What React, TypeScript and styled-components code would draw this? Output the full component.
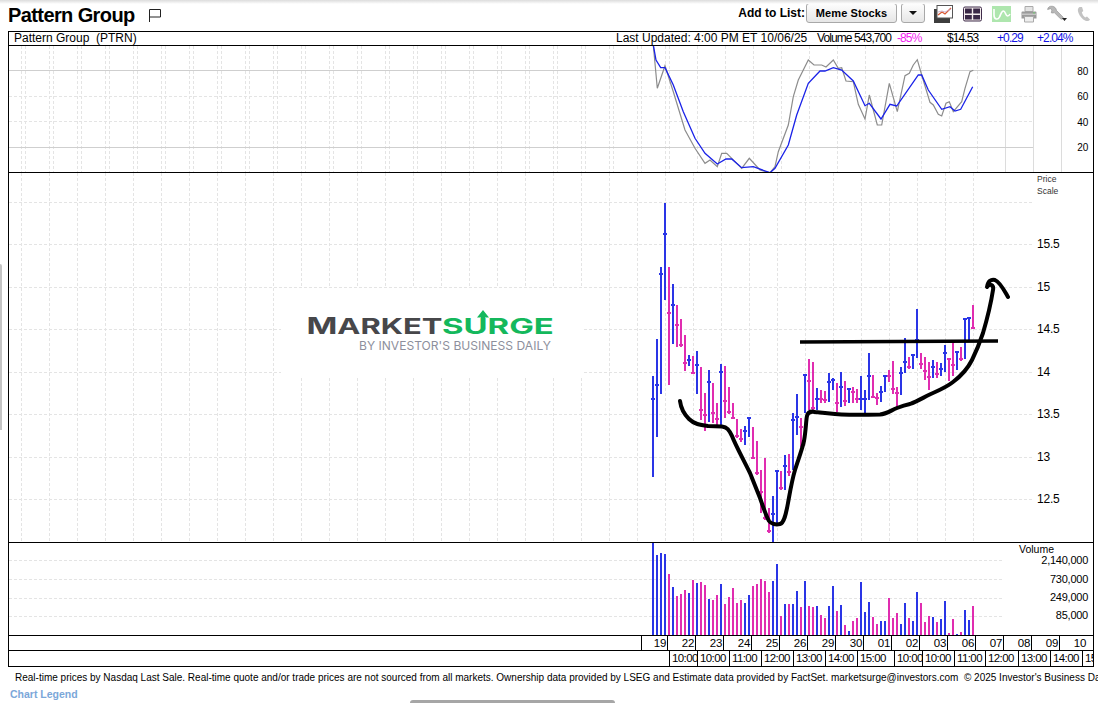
import React from 'react';
import styled, { createGlobalStyle } from 'styled-components';

const BLUE = '#2a35e6';
const PINK = '#e02db0';
const ARIAL = '"Liberation Sans", Arial, sans-serif';

// type, high, low, close (page pixels, read off the chart)
type Bar = ['b' | 'p', number, number, number];
const bars: Bar[] = [
    ['b',376,477,399],['b',339,437,385],['b',267,394,274],['b',203,300,234],['p',267,385,313],['b',284,344,305],
    ['p',305,347,325],['p',319,347,345],['p',335,371,363],['b',355,366,360],['p',356,374,373],['b',351,394,365],
    ['p',367,420,410],['p',393,431,415],['b',370,422,382],['p',383,423,413],['p',403,425,419],['b',364,425,372],
    ['p',366,418,401],['p',387,414,412],['p',403,419,418],['p',419,438,436],['p',429,442,439],['b',426,445,431],
    ['b',417,437,418],['p',427,458,458],['p',441,475,473],['p',470,513,492],['p',458,520,518],['p',508,533,531],
    ['b',496,543,514],['b',471,525,471],['p',471,490,488],['b',455,490,466],['p',454,476,472],['b',413,470,420],
    ['b',394,435,417],['p',418,447,427],['b',374,413,375],['p',359,410,381],['p',362,413,408],['b',388,410,399],
    ['p',390,403,399],['p',391,403,400],['b',373,402,382],['b',378,390,380],['p',383,412,403],['b',372,407,387],
    ['p',381,406,401],['b',388,403,389],['p',387,403,392],['p',389,403,399],['b',376,410,399],['b',390,413,399],
    ['b',353,400,376],['p',375,398,397],['p',393,405,398],['b',386,402,392],['b',375,392,376],['p',370,382,376],
    ['p',361,394,389],['p',387,407,393],['b',367,395,373],['b',338,373,362],['p',357,369,367],['b',354,369,355],
    ['b',309,358,340],['p',353,369,364],['p',357,380,371],['p',362,390,377],['b',360,378,367],['p',362,378,374],
    ['b',363,376,369],['b',345,372,353],['p',359,381,359],['p',343,376,365],['b',351,370,352],['p',347,361,359],
    ['b',318,359,319],['b',317,340,318],['p',305,329,328],
];

const volumes = [
    543,555,553,554,574,587,596,594,590,593,580,583,582,585,599,600,595,584,604,597,588,603,600,603,595,586,584,
    579,581,592,581,564,616,604,604,604,591,607,581,606,607,606,615,618,606,586,611,605,625,631,621,618,582,612,
    602,617,624,621,621,598,618,613,624,603,618,621,592,603,622,616,617,622,619,601,633,619,634,632,610,620,606,
];

// oscillator lines, in 3x crop coordinates of the upper panel
const toOsc = (pts: number[][]) => pts.map(([x, y]) => `${(640 + x / 3).toFixed(1)},${(45 + y / 3).toFixed(1)}`).join(' ');
const oscBlue = toOsc([[40,0],[48,45],[62,68],[75,68],[100,120],[130,200],[165,280],[195,325],[232,357],[258,342],[275,342],[305,368],[340,365],[390,383],[405,370],[445,300],[470,210],[505,115],[540,78],[555,78],[580,68],[605,75],[640,108],[675,182],[688,175],[723,222],[750,178],[770,183],[835,90],[845,90],[865,135],[905,193],[930,185],[945,198],[962,193],[998,125]]);
const oscGray = toOsc([[40,0],[52,130],[75,62],[100,140],[135,255],[165,310],[195,355],[210,345],[232,365],[245,325],[260,325],[305,370],[328,340],[360,375],[390,383],[405,365],[415,320],[445,240],[460,155],[475,105],[505,45],[522,60],[545,60],[558,66],[580,45],[595,70],[605,68],[618,108],[640,110],[655,178],[675,222],[688,150],[712,240],[725,240],[748,115],[772,200],[795,92],[808,85],[820,60],[832,44],[845,90],[870,172],[880,180],[895,208],[905,213],[918,175],[928,170],[940,200],[965,170],[975,130],[990,80],[1000,76]]);

const inkCup = 'M680 401 C681 409 684 414 689 419 C694 424 700 425 708 426 L722 426.5 C727 427 729 430 732 436 C735 444 740 453 750 473 L760 498 C764 509 766 516 769 521 C771 524 776 525 780 524 C784 523 786 514 788 503 C790 492 792 480 795 470 C798 460 802 450 804 441 C806 430 806 420 807 416 C808 412 811 411 815 412 L830 413.5 C840 415 860 415 880 414.5 C886 414 890 411 897 408 C902 406 905 405 910 404 C918 401 926 396 933 393 C942 389 948 386 953 382 C961 376 968 368 972 360 C977 350 980 342 983 333 C988 316 991 303 993 290 C994 285 990 283 987 287 C988 281 991 279 995 280 C1000 282 1004 290 1008 297';

const priceGrid = [202.5, 244.5, 287.5, 329.5, 372.5, 414.5, 457.5, 499.5];
const volGrid = [560.5, 579.5, 598.5, 616.5];
const mainVerticals = Array.from({ length: 35 }, (_, i) => 21.5 + 28 * i);
const upperVerticals = Array.from({ length: 38 }, (_, i) => 25.5 + 28 * i);
const upperExtra = Array.from({ length: 24 }, (_, i) => 21.5 + 28 * i);

const priceLabels: [string, number][] = [['15.5', 244], ['15', 287], ['14.5', 329], ['14', 372], ['13.5', 414], ['13', 457], ['12.5', 499]];
const volLabels: [string, number][] = [['2,140,000', 560], ['730,000', 579], ['249,000', 597], ['85,000', 615]];
const oscLabels: [string, number][] = [['80', 71.5], ['60', 96.5], ['40', 122.5], ['20', 147.5]];

const days = ['19', '22', '23', '24', '25', '26', '29', '30', '01', '02', '03', '06', '07', '08', '09', '10'];
const times: [string, number][] = [['10:00', 28], ['10:00', 32], ['11:00', 32], ['12:00', 32], ['13:00', 32], ['14:00', 32], ['15:00', 37], ['10:00', 28], ['10:00', 32], ['11:00', 31], ['12:00', 33], ['13:00', 32], ['14:00', 32], ['15', 12]];

const App = () => {
    return (
        <Page>
            <GlobalStyle />
            <TopShade />
            <SideHandle />
            <TopBar>
                <Title>Pattern Group</Title>
                <FlagIcon viewBox="0 0 12 13">
                    <path d="M.5 13V.5h11V8H.5" fill="none" stroke="#222" strokeWidth="1" />
                </FlagIcon>
                <TopRight>
                    <AddLabel>Add to List:</AddLabel>
                    <ListButton>Meme Stocks</ListButton>
                    <DropButton><Caret /></DropButton>
                    <ToolIcons>
                        <ToolIcon $w={19} viewBox="0 0 19 18">
                            <rect x="0" y="4" width="16" height="14" fill="#3d3d3d" />
                            <rect x="3" y="0.5" width="15.5" height="12.5" fill="#fff" stroke="#555" />
                            <path d="M4 10l4-3 3 2 6-6" fill="none" stroke="#d8552e" strokeWidth="1.2" />
                            <path d="M4 7l4-1 3 1 6-3" fill="none" stroke="#c4a0c0" strokeWidth=".8" />
                        </ToolIcon>
                        <ToolIcon $w={19} viewBox="0 0 19 15">
                            <rect x=".5" y=".5" width="18" height="14" rx="1.5" fill="#f3ecec" stroke="#3f2c4a" />
                            <path d="M2 2h6.8v5H2zM10.2 2H17v5h-6.8zM2 8.4h6.8V13H2zM10.2 8.4H17V13h-6.8z" fill="#3a2846" />
                        </ToolIcon>
                        <ToolIcon $w={19} viewBox="0 0 19 16">
                            <rect width="19" height="16" fill="#aee6ae" />
                            <path d="M2 3v6c0 5 4 5 5.500 2s2-6 4-6 2 5 4 5c1 0 2-1 2.500-2" fill="none" stroke="#fff" strokeWidth="1.6" />
                        </ToolIcon>
                        <ToolIcon $w={16} viewBox="0 0 16 17">
                            <path d="M4 1h8v5H4z" fill="#e4e4e4" stroke="#aaa" />
                            <path d="M1.500 6h13a1 1 0 0 1 1 1v6h-15V7a1 1 0 0 1 1-1z" fill="#9b9b9b" />
                            <rect x="1" y="8" width="14" height="1.500" fill="#c6c6c6" />
                            <rect x="12" y="6.800" width="2" height="1.200" fill="#7bc47b" />
                            <path d="M3.500 11h9v5.500h-9z" fill="#eee" stroke="#aaa" />
                        </ToolIcon>
                        <ToolIcon $w={20} viewBox="0 0 20 16">
                            <path d="M5.500 .3C3 -.2 .8 1 .6 3.500l3-.8 1.300 1.300-.6 2.800c1.200.4 2.200.3 3-.2l6.200 6.200c1 1 3 .2 2.700-1.500L9.500 4.500C9.200 2.300 7.800 .7 5.500 .3z" fill="#b8b8b8" stroke="#8c8c8c" strokeWidth=".6" />
                            <path d="M15 12h5l-2.500 3z" fill="#222" />
                        </ToolIcon>
                        <ToolIcon $w={14} viewBox="0 0 14 15">
                            <path d="M2.500.5C.8 1.500.3 3.500 1.500 6.500c1.300 3.200 3.800 6.500 7 7.800 2 .7 3.500.2 4.500-1.300l-3-3-1.800 1C6.800 10.200 5.500 8 4.800 5.800l1.500-1.300L5 .5z" fill="#c3c3c3" />
                        </ToolIcon>
                    </ToolIcons>
                </TopRight>
            </TopBar>

            <Frame>
                <InfoRow>
                    <InfoName>Pattern Group&nbsp; (PTRN)</InfoName>
                    <InfoUpdated>Last Updated: 4:00 PM ET 10/06/25</InfoUpdated>
                    <InfoTight $w={80}>Volume 543,700</InfoTight>
                    <InfoTight $w={50} $color="#f21df0">-85%</InfoTight>
                    <InfoTight $w={50}>$14.53</InfoTight>
                    <InfoTight $w={40} $color="#1414e6">+0.29</InfoTight>
                    <InfoTight $w={40} $color="#1414e6">+2.04%</InfoTight>
                </InfoRow>

                <Panel $h={126}>
                    <ChartSvg viewBox="9 46 1084 126">
                        {upperExtra.map(x => <GridLine key={x} x1={x} x2={x} y1={46} y2={172} />)}
                        {upperVerticals.map(x => (x < 1000
                            ? <GridLine key={x} x1={x} x2={x} y1={46} y2={172} />
                            : <line key={x} x1={x} x2={x} y1={46} y2={172} stroke="#dcdcdc" />))}
                        <line x1={9} x2={1033} y1={70.5} y2={70.5} stroke="#cfcfcf" />
                        <GridLine x1={9} x2={1033} y1={96.5} y2={96.5} />
                        <GridLine x1={9} x2={1033} y1={121.5} y2={121.5} />
                        <line x1={9} x2={1033} y1={147.5} y2={147.5} stroke="#cfcfcf" />
                        <polyline points={oscGray} fill="none" stroke="#8c8c8c" strokeWidth="1.2" />
                        <polyline points={oscBlue} fill="none" stroke="#1a22e8" strokeWidth="1.3" />
                    </ChartSvg>
                    {oscLabels.map(([t, y]) => <OscLabel key={t} $top={y - 46}>{t}</OscLabel>)}
                </Panel>

                <Panel $h={369}>
                    <ChartSvg viewBox="9 173 1084 369">
                        {mainVerticals.map(x => <GridLine key={x} x1={x} x2={x} y1={173} y2={542} />)}
                        {priceGrid.map(y => <GridLine key={y} x1={9} x2={1033} y1={y} y2={y} />)}
                        {bars.map(([type, hi, lo, close], i) => {
                            const x = 653 + 4 * i;
                            const fill = type === 'b' ? BLUE : PINK;
                            return (
                                <g key={i} fill={fill}>
                                    <rect x={x - 1} y={hi} width={2} height={lo - hi} />
                                    <rect x={x - 2} y={close - 1} width={4} height={2} />
                                </g>
                            );
                        })}
                        <path d={inkCup} fill="none" stroke="#000" strokeWidth="4" strokeLinecap="round" strokeLinejoin="round" />
                        <path d="M800 342 L998 341" fill="none" stroke="#000" strokeWidth="3.600" />
                    </ChartSvg>
                    <ScaleTitle $top={0}>Price</ScaleTitle>
                    <ScaleTitle $top={12}>Scale</ScaleTitle>
                    {priceLabels.map(([t, y]) => <PriceLabel key={t} $top={y - 173}>{t}</PriceLabel>)}
                    <LogoBox>
                        <LogoSvg viewBox="307 310 246 42">
                            <LogoWord transform="translate(306.500 334) scale(1.44 1)" fill="#47474a">
                                <tspan fontSize="23">M</tspan>ARKET
                            </LogoWord>
                            <LogoWord transform="translate(442 334) scale(1.53 1)" fill="#14b85c">SURGE</LogoWord>
                            <path d="M477 317.500L483 310l6 7.500h-4V322h-4v-4.500z" fill="#14b85c" />
                            <LogoSub x={359} y={350} textLength={192} lengthAdjust="spacingAndGlyphs">BY INVESTOR'S BUSINESS DAILY</LogoSub>
                        </LogoSvg>
                    </LogoBox>
                </Panel>

                <Panel $h={92}>
                    <ChartSvg viewBox="9 543 1084 92">
                        {volGrid.map(y => <GridLine key={y} x1={9} x2={1003} y1={y} y2={y} />)}
                        {volumes.map((top, i) => (
                            <rect key={i} x={652 + 4 * i} y={top} width={2} height={635 - top} fill={bars[i][0] === 'b' ? BLUE : PINK} />
                        ))}
                    </ChartSvg>
                    <VolumeTitle>Volume</VolumeTitle>
                    {volLabels.map(([t, y]) => <VolLabel key={t} $top={y - 543}>{t}</VolLabel>)}
                </Panel>

                <DayRow>
                    <AxisGap $w={632} />
                    {days.map((d, i) => <DayCell key={d} $w={i === 0 ? 26 : 28}>{d}</DayCell>)}
                </DayRow>
                <TimeRow>
                    <AxisGap $w={660} />
                    {times.map(([t, w], i) => <TimeCell key={i} $w={w}>{t}</TimeCell>)}
                </TimeRow>
            </Frame>

            <Footer>
                <Disclaimer>
                    Real-time prices by Nasdaq Last Sale. Real-time quote and/or trade prices are not sourced from all markets. Ownership data provided by LSEG and Estimate data provided by FactSet. marketsurge@investors.com&nbsp; © 2025 Investor's Business Daily
                </Disclaimer>
                <Legend>Chart Legend</Legend>
            </Footer>
            <BottomTab />
        </Page>
    );
};

const GlobalStyle = createGlobalStyle`
    html, body {
        margin: 0;
        padding: 0;
        background: #fff;
        overflow: hidden;
    }
`;

const Page = styled.div`
    position: relative;
    width: 1098px;
    height: 703px;
    overflow: hidden;
    background: #fff;
    font-family: ${ARIAL};
    color: #000;
`;

const TopShade = styled.div`
    position: absolute;
    top: 0;
    left: 0;
    right: 0;
    height: 4px;
    background: linear-gradient(#dcdcdc, #fff);
`;

const SideHandle = styled.div`
    position: absolute;
    left: 0;
    top: 264px;
    width: 2px;
    height: 166px;
    background: #c4c4c4;
    border-top-right-radius: 2px;
`;

const BottomTab = styled.div`
    position: absolute;
    left: 410px;
    bottom: 0;
    width: 205px;
    height: 3px;
    background: #a6a6a6;
    border-radius: 4px 4px 0 0;
`;

const TopBar = styled.div`
    display: flex;
    align-items: center;
    height: 31px;
    padding: 0 7px 0 8px;
    box-sizing: border-box;
`;

const Title = styled.h1`
    margin: 0;
    font-size: 20px;
    font-weight: 700;
    letter-spacing: -0.6px;
    line-height: 31px;
`;

const FlagIcon = styled.svg`
    width: 12px;
    height: 13px;
    margin: -1px 0 0 14px;
`;

const TopRight = styled.div`
    display: flex;
    align-items: center;
    margin-left: auto;
    height: 31px;
    padding-bottom: 5px;
    box-sizing: border-box;
`;

const AddLabel = styled.span`
    font-size: 12px;
    font-weight: 700;
    margin-right: 1px;
`;

const ListButton = styled.div`
    display: flex;
    align-items: center;
    justify-content: center;
    width: 91px;
    height: 20px;
    box-sizing: border-box;
    border: 1px solid #a8a8a8;
    border-radius: 3px;
    background: linear-gradient(#fdfdfd, #e6e6e6);
    font-size: 11px;
    font-weight: 700;
    letter-spacing: 0.1px;
`;

const DropButton = styled(ListButton)`
    width: 24px;
    margin-left: 4px;
`;

const Caret = styled.span`
    width: 0;
    height: 0;
    border-left: 4px solid transparent;
    border-right: 4px solid transparent;
    border-top: 4px solid #111;
`;

const ToolIcons = styled.div`
    display: flex;
    align-items: center;
    gap: 10px;
    margin: 1px 0 0 9px;
`;

const ToolIcon = styled.svg<{ $w: number }>`
    width: ${({ $w }) => $w}px;
    height: 18px;
    display: block;
`;

const Frame = styled.div`
    margin-left: 8px;
    width: 1086px;
    box-sizing: border-box;
    border: 1px solid #000;
`;

const InfoRow = styled.div`
    display: flex;
    align-items: center;
    height: 14px;
    box-sizing: border-box;
    border-bottom: 1px solid #000;
    padding-left: 5px;
    font-size: 12px;
    line-height: 13px;
`;

const InfoName = styled.span`
    width: 602px;
`;

const InfoUpdated = styled.span`
    width: 201px;
`;

const InfoTight = styled.span<{ $w: number; $color?: string }>`
    width: ${({ $w }) => $w}px;
    color: ${({ $color }) => $color || '#000'};
    letter-spacing: -0.9px;
    white-space: nowrap;
`;

const Panel = styled.div<{ $h: number }>`
    position: relative;
    height: ${({ $h }) => $h + 1}px;
    box-sizing: border-box;
    border-bottom: 1px solid #000;
`;

const ChartSvg = styled.svg`
    display: block;
    width: 100%;
    height: 100%;
`;

const GridLine = styled.line`
    stroke: #e4e4e4;
    stroke-width: 1;
    stroke-dasharray: 3 2;
`;

const OscLabel = styled.span<{ $top: number }>`
    position: absolute;
    right: 5px;
    top: ${({ $top }) => $top}px;
    transform: translateY(-50%);
    font-size: 10px;
    line-height: 12px;
    letter-spacing: -0.2px;
`;

const PriceLabel = styled.span<{ $top: number }>`
    position: absolute;
    left: 1028px;
    top: ${({ $top }) => $top}px;
    transform: translateY(-50%);
    font-size: 12px;
    line-height: 14px;
    letter-spacing: -0.2px;
`;

const ScaleTitle = styled.span<{ $top: number }>`
    position: absolute;
    left: 1028px;
    top: ${({ $top }) => $top}px;
    font-size: 8.5px;
    line-height: 12px;
    color: #333;
`;

const VolumeTitle = styled.span`
    position: absolute;
    left: 1010px;
    top: 0;
    font-size: 10.5px;
    line-height: 12px;
`;

const VolLabel = styled.span<{ $top: number }>`
    position: absolute;
    right: 5px;
    top: ${({ $top }) => $top}px;
    transform: translateY(-50%);
    font-size: 11px;
    line-height: 13px;
    letter-spacing: -0.25px;
`;

const LogoBox = styled.div`
    position: absolute;
    left: 272px;
    top: 115px;
    width: 302px;
    height: 88px;
    padding: 22px 0 0 26px;
    box-sizing: border-box;
    background: #fff;
`;

const LogoSvg = styled.svg`
    display: block;
    width: 246px;
    height: 42px;
`;

const LogoWord = styled.text`
    font-family: Inter, ${ARIAL};
    font-size: 21.500px;
    font-weight: 700;
`;

const LogoSub = styled.text`
    font-family: Inter, ${ARIAL};
    font-size: 12px;
    fill: #8d8f9c;
`;

const DayRow = styled.div`
    display: flex;
    height: 15px;
    box-sizing: border-box;
    border-bottom: 1px solid #000;
    font-size: 11.5px;
    line-height: 14px;
`;

const TimeRow = styled.div`
    display: flex;
    height: 15px;
    overflow: hidden;
    font-size: 11.5px;
    line-height: 15px;
`;

const AxisGap = styled.div<{ $w: number }>`
    flex: 0 0 ${({ $w }) => $w}px;
`;

const DayCell = styled.div<{ $w: number }>`
    flex: 0 0 ${({ $w }) => $w}px;
    box-sizing: border-box;
    border-left: 1px solid #000;
    padding-right: 1px;
    text-align: right;
    letter-spacing: -0.3px;
`;

const TimeCell = styled.div<{ $w: number }>`
    flex: 0 0 ${({ $w }) => $w}px;
    box-sizing: border-box;
    border-left: 1px solid #000;
    padding-left: 2px;
    white-space: nowrap;
    overflow: hidden;
    letter-spacing: -0.6px;
`;

const Footer = styled.div`
    display: flex;
    flex-direction: column;
`;

const Disclaimer = styled.div`
    margin: 5px 0 0 15px;
    font-size: 10px;
    line-height: 12px;
    white-space: nowrap;
`;

const Legend = styled.div`
    margin: 4px 0 0 10px;
    font-size: 10.5px;
    font-weight: 700;
    line-height: 12px;
    color: #7ba7d9;
`;

export default App;
